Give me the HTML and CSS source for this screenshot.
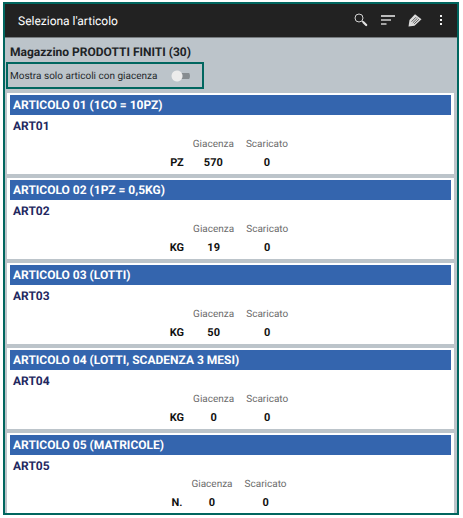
FILE: index.html
```html
<!DOCTYPE html>
<html lang="it">
<head>
<meta charset="UTF-8">
<meta name="viewport" content="width=device-width, initial-scale=1.0">
<title>Seleziona l'articolo</title>
<link rel="stylesheet" href="styles.css">
</head>
<body>

<div class="screen">
  <header class="toolbar">
    <h1>Seleziona l'articolo</h1>
    <button type="button" class="icon-button" aria-label="Cerca">
      <svg width="16" height="16" viewBox="0 0 16 16">
        <circle cx="7" cy="5" r="4" fill="none" stroke="#d4d4d4" stroke-width="1"/>
        <path d="M10 8l1.400 1.400" stroke="#d4d4d4" stroke-width="1"/>
        <path d="M11.400 9.200l2.800 2.800" stroke="#e4e4e4" stroke-width="2.200" stroke-linecap="round"/>
      </svg>
    </button>
    <button type="button" class="icon-button" aria-label="Ordina">
      <svg width="16" height="16" viewBox="0 0 16 16">
        <path d="M2 3h14" stroke="#f0f0f0" stroke-width="1.5"/>
        <path d="M2 7h10M2 11h5.500" stroke="#d0d0d0" stroke-width="1.5"/>
      </svg>
    </button>
    <button type="button" class="icon-button" aria-label="Modifica">
      <svg width="16" height="16" viewBox="0 0 16 16">
        <path d="M2.500 13.500l1-6.500L9 1.200l6.500 5L8.500 12.800z" fill="#dcdcdc"/>
        <path d="M5.500 8.700l4.500-4.500M8.200 10.800l4.800-4.600M6.800 9.800l4.700-4.600" stroke="#222" stroke-width="0.700"/>
      </svg>
    </button>
    <button type="button" class="icon-button" aria-label="Altre opzioni">
      <svg width="16" height="16" viewBox="0 0 16 16" fill="#f0f0f0">
        <rect x="7" y="2" width="2" height="2"/>
        <rect x="7" y="6" width="2" height="2"/>
        <rect x="7" y="10" width="2" height="2"/>
      </svg>
    </button>
  </header>

  <main class="content">
    <h2>Magazzino PRODOTTI FINITI (30)</h2>
    <div class="filter">
      <label for="giacenza">Mostra solo articoli con giacenza</label>
      <input type="checkbox" id="giacenza" class="switch">
    </div>

    <div class="list">
      <section class="card">
        <h3>ARTICOLO 01 (1CO = 10PZ)</h3>
        <p class="code">ART01</p>
        <table>
          <tr><td></td><th scope="col">Giacenza</th><th scope="col">Scaricato</th></tr>
          <tr><td>PZ</td><td>570</td><td>0</td></tr>
        </table>
      </section>

      <section class="card">
        <h3>ARTICOLO 02 (1PZ = 0,5KG)</h3>
        <p class="code">ART02</p>
        <table>
          <tr><td></td><th scope="col">Giacenza</th><th scope="col">Scaricato</th></tr>
          <tr><td>KG</td><td>19</td><td>0</td></tr>
        </table>
      </section>

      <section class="card">
        <h3>ARTICOLO 03 (LOTTI)</h3>
        <p class="code">ART03</p>
        <table>
          <tr><td></td><th scope="col">Giacenza</th><th scope="col">Scaricato</th></tr>
          <tr><td>KG</td><td>50</td><td>0</td></tr>
        </table>
      </section>

      <section class="card">
        <h3>ARTICOLO 04 (LOTTI, SCADENZA 3 MESI)</h3>
        <p class="code">ART04</p>
        <table>
          <tr><td></td><th scope="col">Giacenza</th><th scope="col">Scaricato</th></tr>
          <tr><td>KG</td><td>0</td><td>0</td></tr>
        </table>
      </section>

      <section class="card">
        <h3>ARTICOLO 05 (MATRICOLE)</h3>
        <p class="code">ART05</p>
        <table>
          <tr><td></td><th scope="col">Giacenza</th><th scope="col">Scaricato</th></tr>
          <tr><td>N.</td><td>0</td><td>0</td></tr>
        </table>
      </section>
    </div>
  </main>
</div>

</body>
</html>
```

FILE: styles.css
```css
* {
  box-sizing: border-box;
}

body {
  font-family: Roboto, Arial, sans-serif;
  text-rendering: geometricPrecision;
  background-color: #fff;
  margin: 0;
  padding: 2px 4px 3px 3px;
}

h1, h2, h3, p {
  margin: 0;
}

.screen {
  border: 2px solid #00665f;
  background-color: #bcc4ca;
}

.toolbar {
  display: flex;
  align-items: center;
  gap: 11px;
  height: 34px;
  padding: 0 8px 0 13px;
  background-color: #222;
  border-bottom: 1px solid #777c7f;
}

.toolbar h1 {
  flex: 1;
  color: #fff;
  font-size: 12px;
  font-weight: 400;
}

.icon-button {
  display: flex;
  padding: 0;
  border: none;
  background: none;
  cursor: pointer;
}

.content {
  padding: 4px 3px 0 1px;
}

h2 {
  padding-left: 4px;
  color: #202326;
  font-size: 12px;
  font-weight: 700;
  line-height: 20px;
}

.filter {
  display: flex;
  align-items: center;
  width: fit-content;
  gap: 14px;
  height: 27px;
  padding: 1px 12px 0 2px;
  border: 2px solid #00665f;
  color: #24282b;
  font-size: 10px;
}

.switch {
  appearance: none;
  width: 19px;
  height: 12px;
  margin: 0;
  border-radius: 6px;
  background: radial-gradient(circle at 6px 6px, #ececec 5px, transparent 6px),
    linear-gradient(#868c90, #868c90) 6px 3px / 13px 6px no-repeat;
  cursor: pointer;
}

.switch:checked {
  background: radial-gradient(circle at 13px 6px, #00665f 5px, transparent 6px),
    linear-gradient(#868c90, #868c90) 0 3px / 13px 6px no-repeat;
}

.list {
  display: flex;
  flex-direction: column;
  gap: 4px;
  padding: 4px 0 0 1px;
}

.card {
  padding: 2px 3px;
  background-color: #fff;
}

.card:last-child {
  padding-bottom: 1px;
}

.card h3 {
  padding-left: 3px;
  background-color: #3465ae;
  color: #fff;
  font-size: 12px;
  font-weight: 700;
  line-height: 20px;
}

.code {
  padding: 1px 0 0 3px;
  color: #23285f;
  font-size: 12px;
  font-weight: 700;
  line-height: 20px;
}

table {
  margin: 0 auto;
  border-collapse: collapse;
}

th, td {
  height: 18px;
  padding: 0 6px;
  line-height: 18px;
  text-align: center;
}

th {
  color: #6b6b6b;
  font-size: 10px;
  font-weight: 400;
}

td {
  color: #111;
  font-size: 11px;
  font-weight: 700;
}

td:first-child {
  padding: 0 3px;
}
```
